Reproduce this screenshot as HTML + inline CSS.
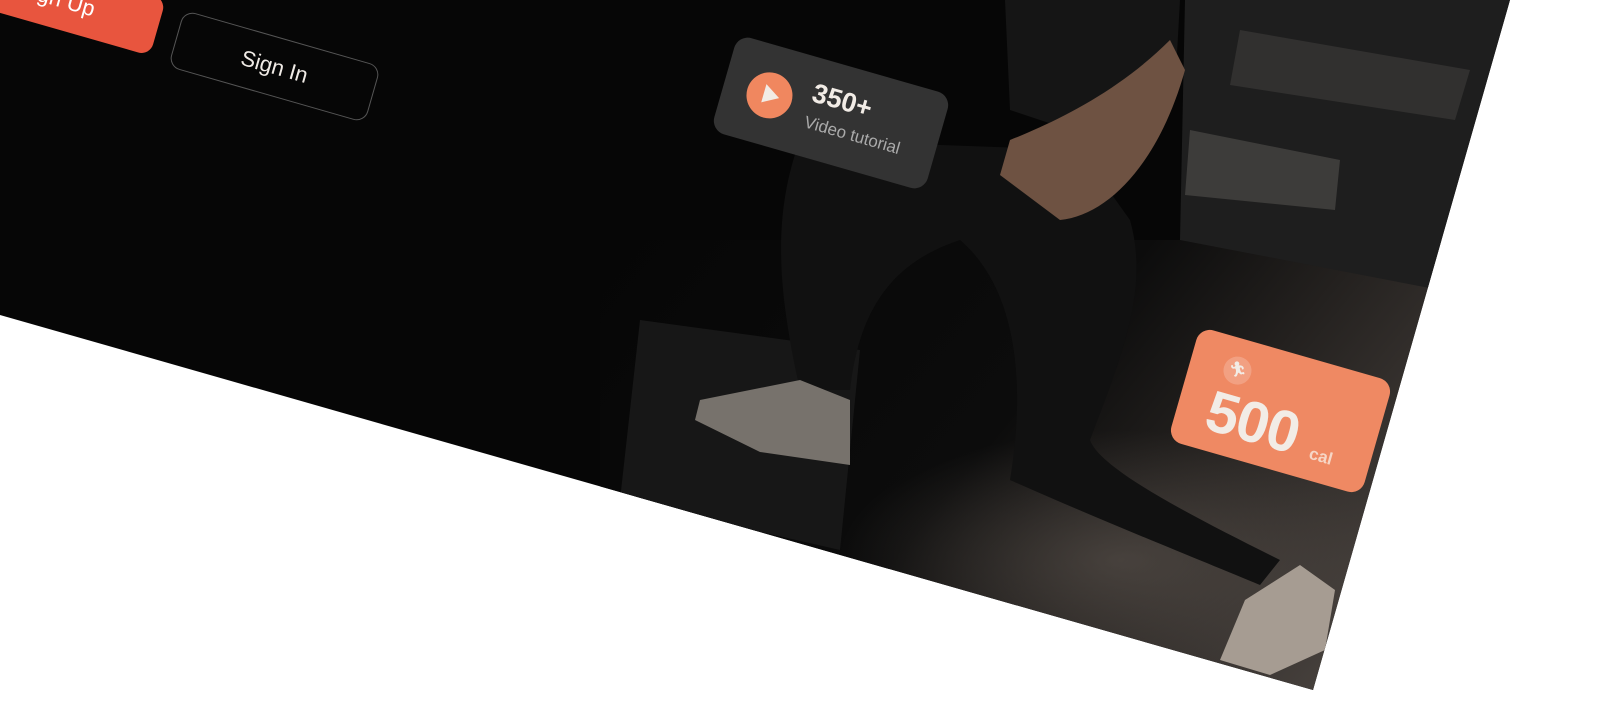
<!DOCTYPE html>
<html><head><meta charset="utf-8"><style>
html,body{margin:0;padding:0;background:#fff;width:1601px;height:708px;overflow:hidden;font-family:"Liberation Sans",sans-serif}
.r{position:absolute;transform:rotate(16deg);transform-origin:center;box-sizing:border-box}
</style></head><body>
<svg width="1601" height="708" style="position:absolute;left:0;top:0">
<defs>
<clipPath id="c"><polygon points="0,0 1510,0 1313,690 0,315"/></clipPath>
<linearGradient id="fl" x1="0" y1="0" x2="1" y2="0.4">
<stop offset="0" stop-color="#060606"/><stop offset="0.5" stop-color="#0c0c0c"/><stop offset="0.7" stop-color="#24211f"/><stop offset="1" stop-color="#48423e"/></linearGradient>
<radialGradient id="fl2" cx="0.5" cy="0.5" r="0.5"><stop offset="0" stop-color="#5e5650"/><stop offset="1" stop-color="#5e5650" stop-opacity="0"/></radialGradient>
</defs>
<polygon points="0,0 1510,0 1313,690 0,315" fill="#060606"/>
<g clip-path="url(#c)">
<rect x="600" y="240" width="950" height="470" fill="url(#fl)"/>
<ellipse cx="1120" cy="560" rx="280" ry="130" fill="url(#fl2)" opacity="0.6"/>
<polygon points="1185,0 1510,0 1440,290 1180,240" fill="#1e1e1e"/>
<polygon points="1190,130 1340,160 1335,210 1185,195" fill="#4a4846" opacity="0.7"/>
<polygon points="1240,30 1470,70 1455,120 1230,85" fill="#3e3c3a" opacity="0.6"/>
<polygon points="640,320 860,350 840,550 620,500" fill="#171717"/>
<path d="M800,140 C770,220 780,300 800,390 L850,390 C860,300 900,260 960,240 C1030,300 1020,420 1010,480 C1100,520 1200,560 1260,585 L1280,560 C1200,520 1100,470 1090,440 C1120,360 1150,290 1130,220 L1080,150 Z" fill="#111"/>
<path d="M1005,0 L1180,0 L1175,90 L1130,150 L1010,110 Z" fill="#151515"/>
<path d="M1010,140 C1060,120 1120,90 1170,40 L1185,70 C1160,160 1110,215 1060,220 L1000,175 Z" fill="#6e5242"/>
<path d="M700,400 L800,380 L850,400 L850,465 L760,452 L695,420 Z" fill="#77726c"/>
<path d="M1245,600 L1300,565 L1335,590 L1325,650 L1270,675 L1220,660 Z" fill="#a69c92"/>
</g>
</svg>

<div class="r" style="left:-48px;top:-31px;width:210px;height:59px;background:#e8553e;border-radius:12px;color:#fff;font-size:22px;display:flex;align-items:center;justify-content:center">Sign Up</div>
<div class="r" style="left:172px;top:37px;width:205px;height:59px;border:1px solid #555;border-radius:12px;color:#f0ebe6;font-size:22px;display:flex;align-items:center;justify-content:center">Sign In</div>

<div class="r" style="left:720px;top:63px;width:222px;height:100px;background:#333;border-radius:14px">
<div style="position:absolute;left:24px;top:27px;width:46px;height:46px;border-radius:50%;background:#f0875f">
<svg width="46" height="46" style="position:absolute;left:0;top:0"><polygon points="17,13 33,23 17,32" fill="#f2ece6"/></svg></div>
<div style="position:absolute;left:88px;top:20px;color:#f2ece6;font-size:27px;font-weight:bold">350+</div>
<div style="position:absolute;left:88px;top:56px;color:#aaa;font-size:17px;white-space:nowrap">Video tutorial</div>
</div>

<div class="r" style="left:1180px;top:352px;width:201px;height:118px;background:#ef8963;border-radius:14px;color:#f2ece6">
<div style="position:absolute;left:34px;top:18px;width:28px;height:28px;border-radius:50%;background:rgba(255,255,255,0.2);font-size:15px;text-align:center;line-height:28px">🏃︎</div>
<div style="position:absolute;left:30px;top:44px;font-size:58px;font-weight:bold;letter-spacing:-1px">500</div>
<div style="position:absolute;left:140px;top:82px;font-size:17px;font-weight:bold;color:#f6d6c6">cal</div>
</div>
</body></html>
